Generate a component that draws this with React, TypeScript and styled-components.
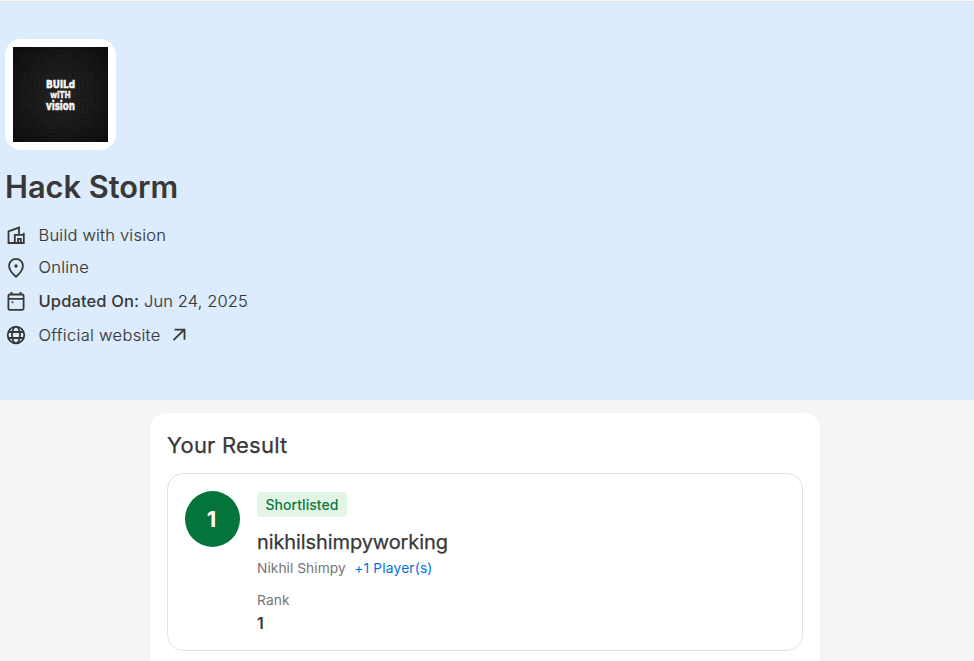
import React from 'react';
import styled, { createGlobalStyle } from 'styled-components';

const GlobalStyle = createGlobalStyle`
  * { box-sizing: border-box; }
  body {
    margin: 0;
    background: #f5f5f5;
    color: #383838;
    font-family: Inter, "Liberation Sans", sans-serif;
  }
`;

const Page = styled.main`
  height: 661px;
  overflow: hidden;
  border-top: 1px solid #f5f6f7;
`;

const Banner = styled.header`
  height: 399px;
  padding: 37px 5px 0;
  background: #ddecfc;
  border-top: 1px solid #dae1e8;
`;

const LogoFrame = styled.div`
  width: 111px;
  height: 111px;
  padding: 8px;
  border-radius: 16px;
  background: #fff;
`;

const LogoArt = styled.svg`
  display: block;
  width: 95px;
  height: 95px;
`;

const Title = styled.h1`
  margin: 17px 0 0;
  font-size: 30.75px;
  line-height: 40px;
  font-weight: 600;
`;

const Details = styled.ul`
  margin: 12px 0 0;
  padding: 0;
  list-style: none;
`;

const Detail = styled.li<{ $height: number; $spacing?: number }>`
  display: flex;
  align-items: center;
  height: ${(p) => p.$height}px;
  font-size: 16.5px;
  font-weight: 300;
  letter-spacing: ${(p) => p.$spacing ?? 0.2}px;
  -webkit-text-stroke: 0.15px #383838;
  white-space: pre;

  b { font-weight: 500; -webkit-text-stroke: 0; }
`;

const DetailIcon = styled.svg`
  flex: none;
  width: 22px;
  height: 22px;
  margin-right: 11.5px;
  fill: none;
  stroke: #383838;
  stroke-width: 1.8;
`;

const ArrowIcon = styled(DetailIcon)`
  width: 14px;
  height: 14px;
  margin: 0 0 0 11px;
`;

const ResultPanel = styled.section`
  width: 670px;
  height: 270px;
  margin: 13px 0 0 150px;
  padding: 17px;
  border-radius: 16px;
  background: #fff;
`;

const PanelTitle = styled.h2`
  margin: 0 0 13px;
  font-size: 22px;
  line-height: 30px;
  font-weight: 400;
  letter-spacing: 0.22px;
  -webkit-text-stroke: 0.25px #383838;
`;

const ResultCard = styled.article`
  display: flex;
  align-items: flex-start;
  gap: 17px;
  height: 178px;
  padding: 17px;
  border: 1px solid #e2e2e2;
  border-radius: 16px;
`;

const RankCircle = styled.div`
  display: grid;
  place-items: center;
  width: 55px;
  height: 56px;
  padding-right: 2px;
  border-radius: 50%;
  background: #03753c;
  color: #fff;
  font-size: 22px;
  font-weight: 700;
`;

const Status = styled.span`
  display: block;
  width: 90px;
  height: 25px;
  margin-top: 1px;
  border-radius: 4px;
  background: #e3f5e7;
  color: #0b7a3e;
  font-size: 14px;
  line-height: 26px;
  font-weight: 500;
  letter-spacing: 0.05px;
  text-align: center;
`;

const TeamName = styled.h3`
  margin: 12px 0 0;
  font-size: 20px;
  line-height: 26px;
  font-weight: 400;
  letter-spacing: -0.1px;
  -webkit-text-stroke: 0.25px #383838;
`;

const Members = styled.div`
  display: flex;
  gap: 8.5px;
  font-size: 13.75px;
  line-height: 26px;
  letter-spacing: 0.05px;
  color: #757575;
`;

const MoreMembers = styled.a`
  color: #0073e6;
  letter-spacing: 0.18px;
`;

const RankLabel = styled.div`
  margin-top: 8px;
  font-size: 13.75px;
  line-height: 22px;
  letter-spacing: 0.1px;
  color: #757575;
`;

const RankValue = styled.div`
  font-size: 16px;
  line-height: 24px;
  font-weight: 600;
`;

function Logo() {
  return (
    <LogoArt viewBox="0 0 95 95" role="img" aria-label="Build with vision">
      <defs>
        <radialGradient id="glow" r=".7">
          <stop offset="0" stopColor="#252525" />
          <stop offset=".6" stopColor="#171717" />
          <stop offset="1" stopColor="#0d0d0d" />
        </radialGradient>
        <pattern id="weave" width="22" height="22" patternUnits="userSpaceOnUse">
          <path d="M0 2h14M0 6h11M16 0v13M20 2v12M2 11v11M6 10v12M9 17h12M9 21h13" stroke="#000" strokeOpacity=".3" strokeWidth=".8" />
        </pattern>
      </defs>
      <rect width="95" height="95" fill="url(#glow)" />
      <rect width="95" height="95" fill="url(#weave)" />
      <g fill="#f5f5f5" stroke="#f5f5f5" strokeWidth=".6" fontFamily="DejaVu Sans, sans-serif" fontWeight="700">
        <text x="33" y="40.5" fontSize="11" textLength="29" lengthAdjust="spacingAndGlyphs">BUiLd</text>
        <text x="37.2" y="50.5" fontSize="8.5" strokeWidth=".4" textLength="20.6" lengthAdjust="spacingAndGlyphs">wiTH</text>
        <text x="33" y="62.5" fontSize="11.5" textLength="29" lengthAdjust="spacingAndGlyphs">vision</text>
      </g>
    </LogoArt>
  );
}

export default function App() {
  return (
    <Page>
      <GlobalStyle />
      <Banner>
        <LogoFrame><Logo /></LogoFrame>
        <Title>Hack Storm</Title>
        <Details>
          <Detail $height={32}>
            <DetailIcon viewBox="0 0 22 22">
              <path d="M9.3 19H3.5V7.3L14 3.6v7.2M9.8 19v-8.2h9V19H3.5M18.8 11V8.7M13 19v-4.2h2.8V19" />
            </DetailIcon>
            Build with vision
          </Detail>
          <Detail $height={32}>
            <DetailIcon viewBox="0 0 22 22">
              <path d="M11 20.8s-6.9-5.8-6.9-11a6.9 6.9 0 0 1 13.8 0C17.9 15 11 20.8 11 20.8Z" />
              <circle cx="11" cy="10" r="1.7" fill="#383838" stroke="none" />
            </DetailIcon>
            Online
          </Detail>
          <Detail $height={36} $spacing={0.12}>
            <DetailIcon viewBox="0 0 22 22">
              <rect x="3.4" y="4.5" width="15.2" height="15.3" rx="1.2" />
              <path d="M3.4 8.8h15.2M6.5 2v2.5M15.5 2v2.5" />
              <circle cx="7.5" cy="12.3" r="1" fill="#383838" stroke="none" />
            </DetailIcon>
            <b>Updated On:</b> Jun 24, 2025
          </Detail>
          <Detail $height={32} $spacing={0.3}>
            <DetailIcon viewBox="0 0 22 22">
              <circle cx="11" cy="11" r="8.3" />
              <ellipse cx="11" cy="11" rx="4" ry="8.3" />
              <path d="M3.5 8h15M3.5 14h15" />
            </DetailIcon>
            Official website
            <ArrowIcon viewBox="0 0 14 14"><path d="M1.5 12.2 12.3 1.5M2.5 1.7h10v10" /></ArrowIcon>
          </Detail>
        </Details>
      </Banner>
      <ResultPanel>
        <PanelTitle>Your Result</PanelTitle>
        <ResultCard>
          <RankCircle>1</RankCircle>
          <div>
            <Status>Shortlisted</Status>
            <TeamName>nikhilshimpyworking</TeamName>
            <Members>
              <span>Nikhil Shimpy</span>
              <MoreMembers>+1 Player(s)</MoreMembers>
            </Members>
            <RankLabel>Rank</RankLabel>
            <RankValue>1</RankValue>
          </div>
        </ResultCard>
      </ResultPanel>
    </Page>
  );
}
